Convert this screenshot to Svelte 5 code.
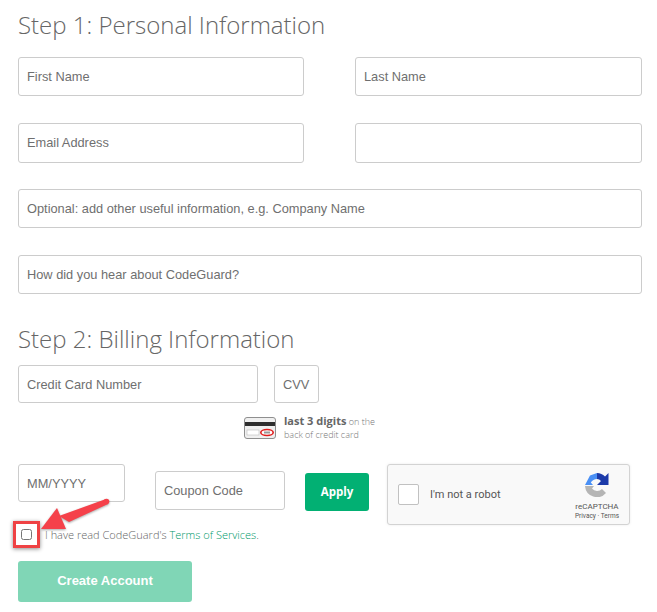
<script>
  const rows = [
    ["First Name", "Last Name"],
    ["Email Address", ""],
  ];
</script>

<form class="page">
  <h2>Step 1: Personal Information</h2>

  {#each rows as row}
    <div class="pair">
      {#each row as label}
        <input type="text" placeholder={label} />
      {/each}
    </div>
  {/each}
  <input class="wide" type="text" placeholder="Optional: add other useful information, e.g. Company Name" />
  <input class="wide last" type="text" placeholder="How did you hear about CodeGuard?" />

  <h2 class="second">Step 2: Billing Information</h2>

  <div class="card-row">
    <input class="card" type="text" placeholder="Credit Card Number" />
    <input class="cvv" type="text" placeholder="CVV" />
  </div>

  <div class="hint">
    <svg width="34" height="24" viewBox="0 0 34 24">
      <rect x="1.5" y="1.5" width="31" height="21" rx="2.5" fill="#f0f0f0" stroke="#8f8f8f" />
      <rect x="2" y="6" width="30" height="4" fill="#2e2e2e" />
      <rect x="4" y="14" width="12" height="5" fill="#fff" stroke="#bbb" stroke-width="0.6" />
      <ellipse cx="24" cy="16.5" rx="6.2" ry="3" fill="#fff" stroke="#e01b1b" stroke-width="1.6" />
      <rect x="21" y="15.5" width="6" height="2" fill="#999" />
    </svg>
    <p><b>last 3 digits</b> on the<br />back of credit card</p>
  </div>

  <div class="pay-row">
    <input class="expiry" type="text" placeholder="MM/YYYY" />
    <input class="coupon" type="text" placeholder="Coupon Code" />
    <button class="apply" type="button">Apply</button>
    <div class="captcha">
      <span class="tick"></span>
      <span class="robot">I'm not a robot</span>
      <div class="brand">
        <svg width="24" height="24" viewBox="0 0 24 24">
          <path d="M0 13 H9 L7 15.5 A6.5 6.5 0 0 0 17 16 L21 20 A12 12 0 0 1 0 13 Z" fill="#b5b5b5" />
          <path d="M12 0 L5 2.5 L0 12 H8 L5.8 9.5 A8 8 0 0 1 12 6 Z" fill="#4a90f5" />
          <path d="M12 0 A12 12 0 0 1 20 3.5 L23.5 0 V12 H12 L16 8 A6 6 0 0 0 12 6 Z" fill="#1c3aa9" />
        </svg>
        <span class="name">reCAPTCHA</span>
        <span class="links">Privacy · Terms</span>
      </div>
    </div>
  </div>

  <label class="terms">
    <span class="flag">
      <input type="checkbox" />
    </span>
    <span class="arrow">
      <svg width="72" height="44" viewBox="0 0 72 44">
        <path d="M65 5 L67 10 L28 28 L18 22 Z" fill="#f5414a" />
        <circle cx="65.5" cy="7.5" r="2.8" fill="#f5414a" />
        <path d="M0 35 L16 14 L25 35 Z" fill="#f5414a" />
      </svg>
    </span>
    <span>I have read CodeGuard's <a href="#terms">Terms of Services</a>.</span>
  </label>

  <button class="create" type="button">Create Account</button>
</form>

<style>
  :global(body) {
    background: #fff;
  }

  .page {
    width: 657px;
    height: 612px;
    box-sizing: border-box;
    padding: 8px 15px 0 18px;
    overflow: hidden;
  }

  h2 {
    margin: 0 0 16px;
    font: 300 24px/33px "Open Sans", sans-serif;
    color: #666;
  }

  h2.second {
    margin: 28px 0 10px;
  }

  input[type="text"] {
    box-sizing: border-box;
    display: block;
    height: 39px;
    padding: 0 8px;
    border: 1px solid #ccc;
    border-radius: 3px;
    background: #fff;
    font: 12.8px "Liberation Sans", sans-serif;
  }

  input::placeholder {
    color: #6f6f6f;
    opacity: 1;
  }

  .pair {
    display: grid;
    grid-template-columns: 286px 287px;
    column-gap: 51px;
    margin-bottom: 27px;
  }

  .pair + .pair {
    margin-bottom: 26px;
  }

  .pair input {
    width: 100%;
  }

  .pair + .pair input {
    height: 40px;
    padding-bottom: 2px;
  }

  .wide {
    width: 624px;
    margin-bottom: 27px;
  }

  .wide.last {
    margin-bottom: 0;
  }

  .card-row {
    display: flex;
    gap: 16px;
  }

  input.card,
  input.cvv,
  input.expiry {
    height: 38px;
  }

  .card {
    width: 240px;
  }

  .cvv {
    width: 45px;
  }

  .hint {
    display: flex;
    align-items: center;
    gap: 7px;
    margin: 11px 0 0 225px;
  }

  .hint p {
    margin: 0;
    font: 300 9px/13px "Open Sans", sans-serif;
    color: #777;
  }

  .hint b {
    font-size: 11px;
    font-weight: 700;
    color: #666;
  }

  .pay-row {
    display: flex;
    align-items: flex-start;
    margin-top: 23px;
  }

  .expiry {
    width: 107px;
    margin-right: 30px;
  }

  .coupon {
    width: 130px;
    margin: 7px 20px 0 0;
  }

  .apply {
    width: 64px;
    height: 38px;
    margin: 9px 18px 0 0;
    padding: 0 0 2px;
    border: 0;
    border-radius: 3px;
    background: #02b073;
    color: #fff;
    font: 700 11.5px "Open Sans", sans-serif;
  }

  .captcha {
    box-sizing: border-box;
    display: flex;
    align-items: center;
    width: 243px;
    height: 61px;
    padding: 0 10px;
    border: 1px solid #d3d3d3;
    border-radius: 3px;
    background: #f9f9f9;
    box-shadow: 0 0 3px rgba(0, 0, 0, 0.08);
  }

  .tick {
    box-sizing: border-box;
    width: 21px;
    height: 21px;
    border: 1px solid #c1c1c1;
    border-radius: 2px;
    background: #fff;
  }

  .robot {
    margin-left: 11px;
    font: 11px Roboto, sans-serif;
    color: #555;
  }

  .brand {
    display: flex;
    flex-direction: column;
    align-items: center;
    margin: 4px 0 0 auto;
    font-family: Roboto, sans-serif;
    color: #555;
  }

  .brand svg {
    margin-bottom: 2px;
  }

  .name {
    margin-top: 3px;
    font-size: 8px;
    line-height: 10px;
  }

  .links {
    font-size: 6.5px;
    line-height: 9px;
  }

  .terms {
    position: relative;
    display: flex;
    align-items: center;
    height: 18px;
    margin-top: 0;
    padding-left: 27px;
    font: 300 11px "Open Sans", sans-serif;
    color: #666;
  }

  .terms a {
    color: #00996a;
    text-decoration: none;
  }

  .flag {
    position: absolute;
    left: -5px;
    top: -4px;
    box-sizing: border-box;
    width: 27px;
    height: 27px;
    border: 3px solid #ef4244;
    box-shadow: 0 1px 4px rgba(0, 0, 0, 0.45);
    display: flex;
    align-items: center;
    justify-content: center;
  }

  .flag input {
    width: 11px;
    height: 11px;
    margin: 0;
  }

  .arrow {
    position: absolute;
    left: 23px;
    top: -31px;
    line-height: 0;
    filter: drop-shadow(0 1px 1px rgba(0, 0, 0, 0.35));
  }

  .create {
    display: block;
    width: 174px;
    height: 41px;
    margin-top: 18px;
    padding: 0 0 2px;
    border: 0;
    border-radius: 3px;
    background: #80d6b6;
    color: #fff;
    font: 700 13px "Liberation Sans", sans-serif;
  }
</style>
